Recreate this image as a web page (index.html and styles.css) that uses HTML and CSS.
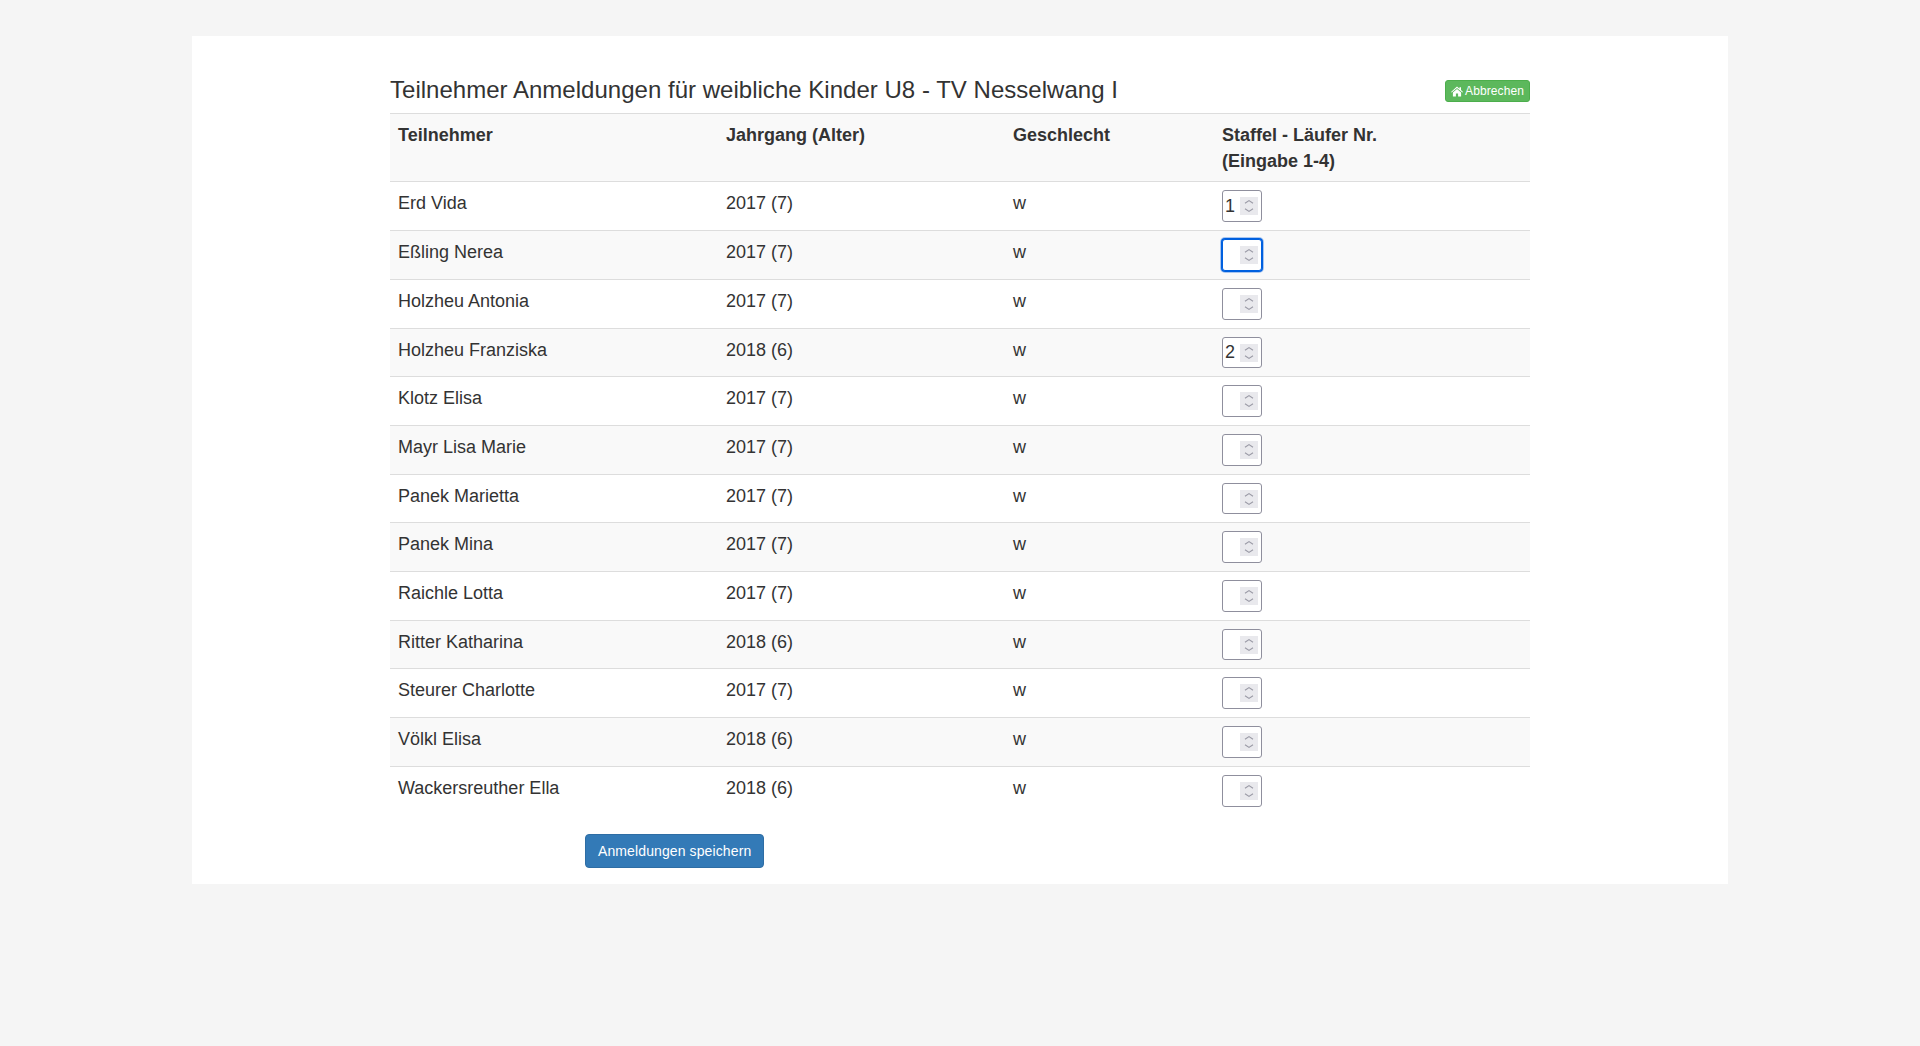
FILE: index.html
```html
<!DOCTYPE html>
<html lang="de">
<head>
<meta charset="utf-8">
<title>Teilnehmer Anmeldungen</title>
<link rel="stylesheet" href="styles.css">
</head>
<body>
<main class="sheet">
  <div class="content">
    <div class="title-row">
      <h4 class="title">Teilnehmer Anmeldungen für weibliche Kinder U8 - TV Nesselwang I</h4>
      <a class="btn-cancel" href="#"><svg class="home" viewBox="0 0 12 11" width="12" height="11" aria-hidden="true"><path d="M6 .6 0 5.9l.6.7L6 1.9l5.4 4.7.6-.7-2-1.8V1.3H8.5v1.4L6 .6Z"/><path d="M6 2.9 1.9 6.5v4h3V7.6h2.2v2.9h3v-4L6 2.9Z"/></svg> Abbrechen</a>
    </div>
    <form>
    <table class="grid">
      <colgroup><col class="c1"><col class="c2"><col class="c3"><col class="c4"></colgroup>
      <thead>
        <tr><th>Teilnehmer</th><th>Jahrgang (Alter)</th><th>Geschlecht</th><th>Staffel - Läufer Nr.<br>(Eingabe 1-4)</th></tr>
      </thead>
      <tbody>
        <tr><td>Erd Vida</td><td>2017 (7)</td><td>w</td><td><span class="field"><input class="num" type="number" min="1" max="4" value="1"><svg class="spin" viewBox="0 0 18 18" aria-hidden="true"><path d="M5 6.2 9 3.6l4 2.6M5 11.8l4 2.6 4-2.6"/></svg></span></td></tr>
        <tr><td>Eßling Nerea</td><td>2017 (7)</td><td>w</td><td><span class="field"><input class="num is-focused" type="number" min="1" max="4" autofocus><svg class="spin" viewBox="0 0 18 18" aria-hidden="true"><path d="M5 6.2 9 3.6l4 2.6M5 11.8l4 2.6 4-2.6"/></svg></span></td></tr>
        <tr><td>Holzheu Antonia</td><td>2017 (7)</td><td>w</td><td><span class="field"><input class="num" type="number" min="1" max="4"><svg class="spin" viewBox="0 0 18 18" aria-hidden="true"><path d="M5 6.2 9 3.6l4 2.6M5 11.8l4 2.6 4-2.6"/></svg></span></td></tr>
        <tr><td>Holzheu Franziska</td><td>2018 (6)</td><td>w</td><td><span class="field"><input class="num" type="number" min="1" max="4" value="2"><svg class="spin" viewBox="0 0 18 18" aria-hidden="true"><path d="M5 6.2 9 3.6l4 2.6M5 11.8l4 2.6 4-2.6"/></svg></span></td></tr>
        <tr><td>Klotz Elisa</td><td>2017 (7)</td><td>w</td><td><span class="field"><input class="num" type="number" min="1" max="4"><svg class="spin" viewBox="0 0 18 18" aria-hidden="true"><path d="M5 6.2 9 3.6l4 2.6M5 11.8l4 2.6 4-2.6"/></svg></span></td></tr>
        <tr><td>Mayr Lisa Marie</td><td>2017 (7)</td><td>w</td><td><span class="field"><input class="num" type="number" min="1" max="4"><svg class="spin" viewBox="0 0 18 18" aria-hidden="true"><path d="M5 6.2 9 3.6l4 2.6M5 11.8l4 2.6 4-2.6"/></svg></span></td></tr>
        <tr><td>Panek Marietta</td><td>2017 (7)</td><td>w</td><td><span class="field"><input class="num" type="number" min="1" max="4"><svg class="spin" viewBox="0 0 18 18" aria-hidden="true"><path d="M5 6.2 9 3.6l4 2.6M5 11.8l4 2.6 4-2.6"/></svg></span></td></tr>
        <tr><td>Panek Mina</td><td>2017 (7)</td><td>w</td><td><span class="field"><input class="num" type="number" min="1" max="4"><svg class="spin" viewBox="0 0 18 18" aria-hidden="true"><path d="M5 6.2 9 3.6l4 2.6M5 11.8l4 2.6 4-2.6"/></svg></span></td></tr>
        <tr><td>Raichle Lotta</td><td>2017 (7)</td><td>w</td><td><span class="field"><input class="num" type="number" min="1" max="4"><svg class="spin" viewBox="0 0 18 18" aria-hidden="true"><path d="M5 6.2 9 3.6l4 2.6M5 11.8l4 2.6 4-2.6"/></svg></span></td></tr>
        <tr><td>Ritter Katharina</td><td>2018 (6)</td><td>w</td><td><span class="field"><input class="num" type="number" min="1" max="4"><svg class="spin" viewBox="0 0 18 18" aria-hidden="true"><path d="M5 6.2 9 3.6l4 2.6M5 11.8l4 2.6 4-2.6"/></svg></span></td></tr>
        <tr><td>Steurer Charlotte</td><td>2017 (7)</td><td>w</td><td><span class="field"><input class="num" type="number" min="1" max="4"><svg class="spin" viewBox="0 0 18 18" aria-hidden="true"><path d="M5 6.2 9 3.6l4 2.6M5 11.8l4 2.6 4-2.6"/></svg></span></td></tr>
        <tr><td>Völkl Elisa</td><td>2018 (6)</td><td>w</td><td><span class="field"><input class="num" type="number" min="1" max="4"><svg class="spin" viewBox="0 0 18 18" aria-hidden="true"><path d="M5 6.2 9 3.6l4 2.6M5 11.8l4 2.6 4-2.6"/></svg></span></td></tr>
        <tr><td>Wackersreuther Ella</td><td>2018 (6)</td><td>w</td><td><span class="field"><input class="num" type="number" min="1" max="4"><svg class="spin" viewBox="0 0 18 18" aria-hidden="true"><path d="M5 6.2 9 3.6l4 2.6M5 11.8l4 2.6 4-2.6"/></svg></span></td></tr>
      </tbody>
    </table>
    <div class="actions"><button class="btn-save" type="button">Anmeldungen speichern</button></div>
    </form>
  </div>
</main>
</body>
</html>
```
FILE: styles.css
```css
* { box-sizing: border-box; }
html, body { margin: 0; padding: 0; }
body {
  height: 1046px;
  overflow: hidden;
  background: #f5f5f5;
  font-family: "Liberation Sans", Arial, sans-serif;
  font-size: 18px;
  line-height: 1.42857143;
  color: #333;
  padding-top: 36px;
}
.sheet {
  width: 1536px;
  margin: 0 auto;
  background: #fff;
  height: 848px;
}
.content {
  width: 1140px;
  margin: 0 auto;
  padding-top: 37px;
}
.title-row {
  display: flex;
  justify-content: space-between;
  align-items: flex-start;
  height: 40px;
}
.title {
  margin: 0;
  font-size: 24px;
  font-weight: 400;
  line-height: 34px;
  letter-spacing: 0.02px;
}
.btn-cancel {
  display: inline-flex;
  align-items: center;
  gap: 2px;
  height: 22px;
  margin-top: 7px;
  padding: 1px 5px;
  font-size: 12px;
  line-height: 18px;
  letter-spacing: 0.1px;
  color: #fff;
  text-decoration: none;
  background: #5cb85c;
  border: 1px solid #4cae4c;
  border-radius: 3px;
}
.home { fill: #fff; flex: none; }
.grid {
  width: 1140px;
  table-layout: fixed;
  border-collapse: collapse;
  border-spacing: 0;
}
.c1 { width: 328px; }
.c2 { width: 287px; }
.c3 { width: 209px; }
.c4 { width: 316px; }
th, td {
  padding: 9px 8px 7px;
  text-align: left;
  vertical-align: top;
  border-top: 1px solid #ddd;
}
td { padding-bottom: 8px; }
th { font-weight: 700; }
thead tr { background: #f9f9f9; }
tbody tr:nth-child(even) { background: #f9f9f9; }
.field {
  display: block;
  position: relative;
  width: 40px;
  height: 31.714px;
  margin-top: -1px;
}
.num {
  display: block;
  width: 40px;
  height: 100%;
  padding: 1px 2px;
  font-family: inherit;
  font-size: 18px;
  color: #333;
  background: #fff;
  border: 1px solid #8f8f9d;
  border-radius: 3px;
  outline: none;
  appearance: textfield;
}
.num::-webkit-inner-spin-button { appearance: none; }
.num.is-focused {
  border-color: #0060df;
  box-shadow: 0 0 0 1px #0060df, 0 0 0 2px #a9c6f0;
}
.spin {
  position: absolute;
  top: 7px;
  right: 4px;
  width: 18px;
  height: 18px;
  background: #e9e9ed;
  pointer-events: none;
}
.spin path {
  fill: none;
  stroke: #9a9aa6;
  stroke-width: 1.2;
}
.actions {
  margin-top: 19.5px;
  padding-left: 195px;
}
.btn-save {
  height: 34px;
  padding: 6px 12px;
  font-family: inherit;
  font-size: 14px;
  line-height: 20px;
  letter-spacing: 0.11px;
  color: #fff;
  background: #337ab7;
  border: 1px solid #2e6da4;
  border-radius: 4px;
}
```
